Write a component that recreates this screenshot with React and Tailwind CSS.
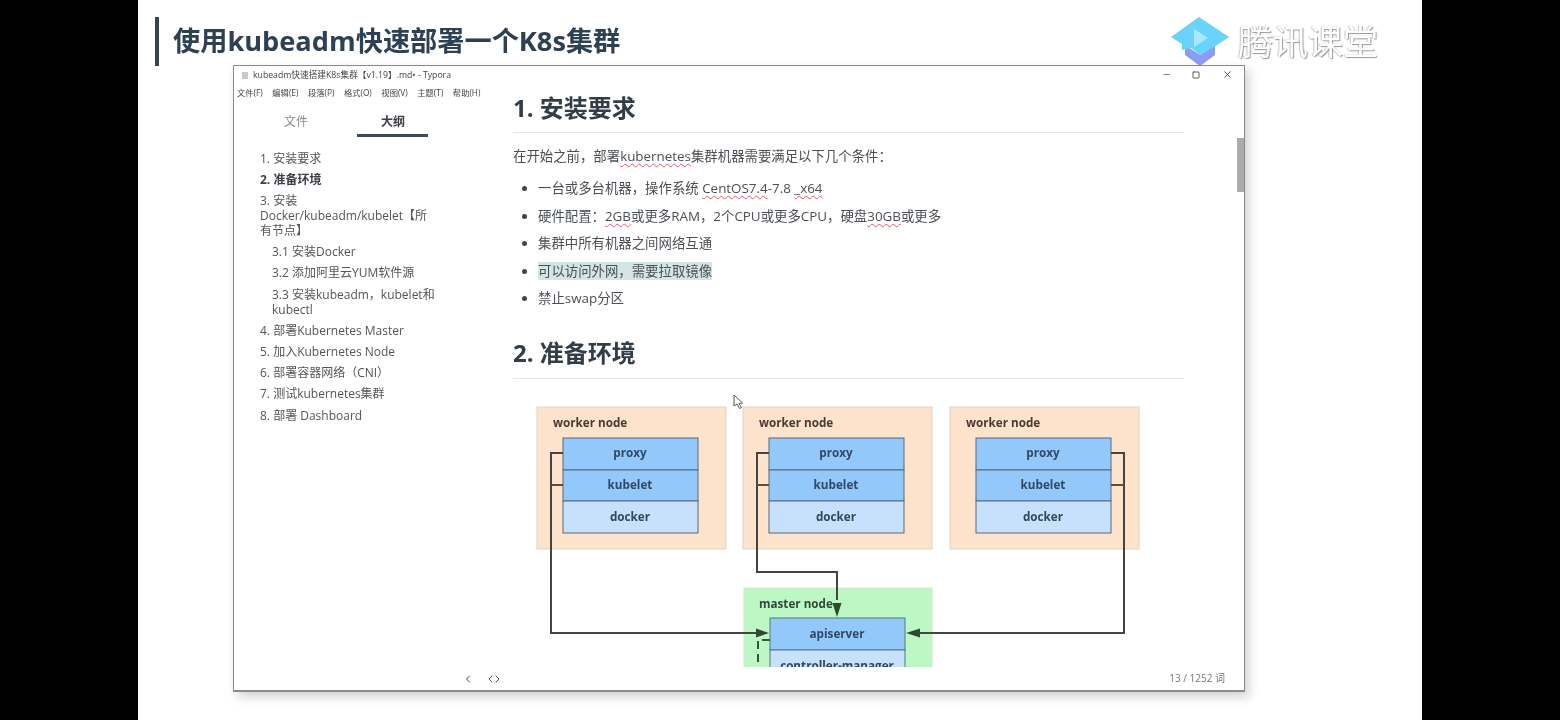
import { Minus, Square, X, ChevronLeft, Code } from 'lucide-react'

const uiFont = { fontFamily: '"Open Sans", "Noto Sans CJK SC", sans-serif' }

const outline = [
  { text: '1. 安装要求', gap: 'mb-[6px]' },
  { text: '2. 准备环境', bold: true, gap: 'mb-[6px]' },
  { text: '3. 安装 Docker/kubeadm/kubelet【所有节点】', gap: 'mb-[6px]' },
  { text: '3.1 安装Docker', sub: true, gap: 'mb-[6px]' },
  { text: '3.2 添加阿里云YUM软件源', sub: true, gap: 'mb-[7px]' },
  { text: '3.3 安装kubeadm，kubelet和kubectl', sub: true, gap: 'mb-[6px]' },
  { text: '4. 部署Kubernetes Master', gap: 'mb-[6px]' },
  { text: '5. 加入Kubernetes Node', gap: 'mb-[6px]' },
  { text: '6. 部署容器网络（CNI）', gap: 'mb-[6px]' },
  { text: '7. 测试kubernetes集群', gap: 'mb-[7px]' },
  { text: '8. 部署 Dashboard', gap: '' },
]

const menus = ['文件(F)', '编辑(E)', '段落(P)', '格式(O)', '视图(V)', '主题(T)', '帮助(H)']

function Wavy({ children }) {
  return <span className="underline decoration-wavy decoration-[#e0586a] decoration-1 underline-offset-2">{children}</span>
}

function Logo() {
  return (
    <svg width="60" height="52" viewBox="0 0 60 52">
      <path d="M15 30 L30 40 L45 30 L45 40 L30 51 L15 40 Z" fill="#8c9cf4" />
      <path d="M1 22 L29 2 L59 22 L44 32 L30 40 L21 33 L12 35 L12 29 Z" fill="#69d3fb" />
      <path d="M24 14 L38 23 L24 32 Z" fill="#a9e8fc" />
    </svg>
  )
}

function WorkerNode({ x, inner }) {
  return (
    <g fontFamily="Open Sans, sans-serif" fontWeight="700" fontSize="11.7" textAnchor="middle">
      <rect x={x} y="12" width="189" height="142" fill="#fde3cc" stroke="#e2d3c3" />
      <text x={x + 16} y="32" textAnchor="start" fill="#4a3a30">worker node</text>
      <rect x={inner} y="43" width="135" height="32" fill="#93c8fb" stroke="#56687a" />
      <rect x={inner} y="75" width="135" height="31" fill="#93c8fb" stroke="#56687a" />
      <rect x={inner} y="106" width="135" height="32" fill="#c7e0fb" stroke="#56687a" />
      <text x={inner + 67} y="62" fill="#2f4a68">proxy</text>
      <text x={inner + 67} y="94" fill="#2f4a68">kubelet</text>
      <text x={inner + 67} y="126" fill="#33475c">docker</text>
    </g>
  )
}

function Diagram() {
  return (
    <svg width="671" height="272" viewBox="0 0 671 272" className="block">
      <WorkerNode x={24} inner={50} />
      <WorkerNode x={230} inner={256} />
      <WorkerNode x={437} inner={463} />
      <g fontFamily="Open Sans, sans-serif" fontWeight="700" fontSize="11.7" textAnchor="middle">
        <rect x="231" y="193" width="188" height="90" fill="#bdf7c3" stroke="#cfe8d0" />
        <text x="246" y="213" textAnchor="start" fill="#2f4a38">master node</text>
        <rect x="257" y="223" width="135" height="32" fill="#93c8fb" stroke="#4f7a78" />
        <rect x="257" y="255" width="135" height="30" fill="#c7e0fb" stroke="#4f7a78" />
        <text x="324" y="243" fill="#2f4a68">apiserver</text>
        <text x="324" y="275" fill="#33475c">controller-manager</text>
      </g>
      <g fill="none" stroke="#444442" strokeWidth="2">
        <path d="M50 58 H38 V238 H246" />
        <path d="M50 90 H38" stroke="#6b4a35" />
        <path d="M256 58 H244 V177 H324 V205" />
        <path d="M256 90 H244" stroke="#6b4a35" />
        <path d="M598 58 H611 V238 H405" />
        <path d="M598 90 H611" stroke="#6b4a35" />
        <path d="M257 245 H245 V272" stroke="#2f5a3a" strokeDasharray="8 5" />
      </g>
      <g fill="#2c4a32">
        <path d="M256 238 L243 233.5 L243 242.5 Z" />
        <path d="M324 222 L319.5 208 L328.5 208 Z" />
        <path d="M393 238 L407 233.5 L407 242.5 Z" />
      </g>
    </svg>
  )
}

export default function App() {
  return (
    <div className="h-[720px] w-[1560px] overflow-hidden bg-black" style={uiFont}>
      <div className="ml-[138px] h-[720px] w-[1284px] bg-white blur-[0.4px]">
        <header className="flex h-[65px] items-start">
          <div className="ml-[17px] mt-[17px] h-[49px] w-[4px] bg-[#39434e]" />
          <h1 className="ml-[14px] mt-[21px] text-[27.2px] font-bold leading-[40px] text-[#2e4154]">
            使用kubeadm快速部署一个K8s集群
          </h1>
          <div className="ml-auto mr-[44px] mt-[15px] flex items-start">
            <Logo />
            <span className="ml-[8px] mt-[5px] text-[35px] leading-[44px] text-white [text-shadow:1px_1px_1px_#9a9a9a,-1px_0_1px_#c4c4c4]">
              腾讯课堂
            </span>
          </div>
        </header>

        <section className="relative ml-[95px] flex h-[627px] w-[1012px] flex-col border border-b-2 border-[#8b8b8b] bg-white text-[#4b4f54] shadow-[4px_5px_10px_rgba(0,0,0,0.18)]">
          <div className="flex h-[19px] shrink-0 items-center text-[8.7px] text-[#444]">
            <span className="ml-[8px] mr-[5px] h-[7px] w-[6px] bg-[#c9c9c9]" />
            <span>kubeadm快速搭建K8s集群【v1.19】.md• - Typora</span>
            <Minus size={9} className="mb-[2px] ml-auto text-[#555]" />
            <Square size={8} className="mb-[2px] ml-[21px] text-[#333]" strokeWidth={2.4} />
            <X size={11} className="mb-[2px] ml-[22px] mr-[11px] text-[#444]" />
          </div>

          <div className="flex min-h-0 flex-1">
            <aside className="w-[279px] shrink-0">
              <nav className="mt-[2px] flex gap-[9.5px] pl-[3px] text-[8.3px] leading-[12px] text-[#444]">
                {menus.map((m) => <span key={m}>{m}</span>)}
              </nav>
              <div className="relative mt-[14px] h-[31px] text-[12px]">
                <span className="absolute left-[50px] top-[0px] text-[#8b8b8b]">文件</span>
                <span className="absolute left-[147px] top-[0px] font-bold text-[#3c3f44]">大纲</span>
                <span className="absolute left-[123px] top-[21px] h-[3px] w-[71px] bg-[#3e4c5a]" />
              </div>
              <ul className="mt-[7px] w-[203px] pl-[26px] text-[12px] leading-[15px] text-[#555]">
                {outline.map((item) => (
                  <li key={item.text} className={`${item.gap} ${item.sub ? 'pl-[12px]' : ''} ${item.bold ? 'font-bold text-[#3b3f44]' : ''}`}>
                    {item.text}
                  </li>
                ))}
              </ul>
            </aside>

            <main className="relative min-w-0 flex-1 overflow-hidden pr-[60px]">
              <h2 className="mt-[7px] border-b border-[#e6e6e6] pb-[9px] text-[24px] font-bold leading-[31px] text-[#333d47]">
                1. 安装要求
              </h2>
              <p className="mt-[14px] text-[13.4px] leading-[18px]">
                在开始之前，部署<Wavy>kubernetes</Wavy>集群机器需要满足以下几个条件：
              </p>
              <ul className="mt-[10px] list-disc pl-[25px] text-[13.4px] leading-[27.5px] marker:text-[#444]">
                <li>一台或多台机器，操作系统 <Wavy>CentOS7.4</Wavy>-7.8 <Wavy>_x64</Wavy></li>
                <li>硬件配置：<Wavy>2GB</Wavy>或更多RAM，2个CPU或更多CPU，硬盘<Wavy>30GB</Wavy>或更多</li>
                <li>集群中所有机器之间网络互通</li>
                <li><span className="bg-[#d5e5e6]">可以访问外网，需要拉取镜像</span></li>
                <li>禁止swap分区</li>
              </ul>
              <h2 className="mt-[24px] border-b border-[#e6e6e6] pb-[10px] text-[24px] font-bold leading-[31px] text-[#333d47]">
                2. 准备环境
              </h2>
              <div className="mt-[16px] h-[272px] w-[671px] overflow-hidden">
                <Diagram />
              </div>
              <div className="absolute right-0 top-[53px] h-[54px] w-[7px] bg-[#ababab]" />
            </main>
          </div>

          <footer className="flex h-[23px] shrink-0 items-center bg-white text-[10px] text-[#777]">
            <ChevronLeft size={12} className="ml-[228px] text-[#444]" />
            <Code size={12} className="ml-[14px] text-[#555]" />
            <span className="ml-auto mr-[19px]">13 / 1252 词</span>
          </footer>
          <svg width="12" height="16" viewBox="0 0 12 16" className="absolute left-[499px] top-[328px]">
            <path d="M1 1 V12 L4 10 L6.5 14.5 L8.5 13.5 L6 9.5 L9.5 9 Z" fill="#fff" stroke="#555" strokeWidth="1" />
          </svg>
        </section>
      </div>
    </div>
  )
}
